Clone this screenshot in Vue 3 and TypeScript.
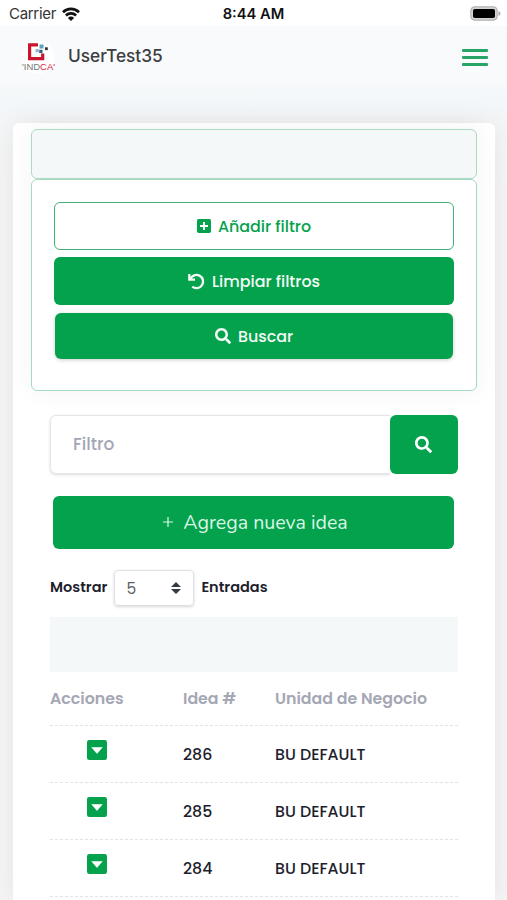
<script setup lang="ts">
interface Idea {
  id: number
  unit: string
}

const ideas: Idea[] = [
  { id: 286, unit: 'BU DEFAULT' },
  { id: 285, unit: 'BU DEFAULT' },
  { id: 284, unit: 'BU DEFAULT' },
]

const searchPath =
  'M505 442.7L405.3 343c-4.5-4.5-10.6-7-17-7H372c27.6-35.3 44-79.7 44-128C416 93.1 322.9 0 208 0S0 93.1 0 208s93.1 208 208 208c48.3 0 92.7-16.4 128-44v16.3c0 6.4 2.5 12.5 7 17l99.700 99.700c9.400 9.400 24.600 9.400 33.900 0l28.300-28.300c9.400-9.400 9.400-24.600.1-34zM208 336c-70.700 0-128-57.200-128-128 0-70.700 57.200-128 128-128 70.700 0 128 57.200 128 128 0 70.700-57.200 128-128 128z'
</script>

<template>
  <div class="screen">
    <div class="status">
      <div class="carrier">
        <span class="carrier-name">Carrier</span>
        <svg class="wifi" viewBox="0 0 18 14" fill="none" stroke="#111" stroke-width="2.700">
          <path d="M1 5.200a11.500 11.500 0 0 1 16 0M3.900 8.500a7.300 7.300 0 0 1 10.200 0" />
          <path d="M9 14 5.900 10.900a4.400 4.400 0 0 1 6.200 0z" fill="#111" stroke="none" />
        </svg>
      </div>
      <span class="clock">8:44 AM</span>
      <svg class="battery" viewBox="0 0 31 15">
        <rect x=".8" y=".8" width="26.400" height="13.400" rx="4" fill="#d4d4d4" stroke="#b4b4b4" stroke-width="1.200" />
        <rect x="3" y="3" width="22" height="9" rx="1.800" fill="#000" />
        <path d="M28.500 5v5q2-.8 2-2.500t-2-2.500" fill="#aaa" />
      </svg>
    </div>

    <header class="topbar">
      <svg class="logo" viewBox="0 0 34 34">
        <circle cx="17" cy="17" r="16.500" fill="#fff" />
        <path d="M17 4.800H8.600v13.900h13.100v-5.200" fill="none" stroke="#c8142f" stroke-width="3.200" />
        <path d="M18.500 4.500h4v4h-4z" fill="#5aa3ba" />
        <path d="M14.500 9h3.300v3.300h-3.300z" fill="#8fb8cc" />
        <path d="M18.200 9.800h3.300v3.300h-3.300z" fill="#33607f" />
        <path d="M24 7.300h2.800v2.800h-2.800z" fill="#333" />
        <text x="1" y="29.800" class="logo-text" textLength="33" lengthAdjust="spacingAndGlyphs"><tspan fill="#777">'IND</tspan><tspan fill="#d92547">CA'</tspan></text>
      </svg>
      <span class="username">UserTest35</span>
      <button class="menu" aria-label="Menu"><i /><i /><i /></button>
    </header>

    <main class="card">
      <section class="filters">
        <div class="filters-head" />
        <div class="filters-body">
          <button class="btn outline">
            <svg class="ico-plus" viewBox="0 0 14 14"><rect width="14" height="14" rx="1.700" fill="currentColor" /><path d="M7 3v8M3 7h8" stroke="#fff" stroke-width="2" /></svg>
            <span>Añadir filtro</span>
          </button>
          <button class="btn solid">
            <svg class="ico-undo" viewBox="0 0 17 17" fill="none" stroke="currentColor" stroke-width="2.300"><path d="M1.300 1v5.700H7M2.300 6.200A6.600 6.600 0 1 1 4.300 13.600" /></svg>
            <span>Limpiar filtros</span>
          </button>
          <button class="btn solid inset">
            <svg class="ico-search" viewBox="0 0 512 512"><path :d="searchPath" fill="currentColor" /></svg>
            <span>Buscar</span>
          </button>
        </div>
      </section>

      <div class="content">
        <div class="search">
          <div class="search-field"><span>Filtro</span></div>
          <button class="search-btn" aria-label="Buscar">
            <svg viewBox="0 0 512 512"><path :d="searchPath" fill="currentColor" /></svg>
          </button>
        </div>

        <button class="new-idea">
          <svg viewBox="0 0 10 10"><path d="M5 0v10M0 5h10" stroke="currentColor" stroke-width="1.200" /></svg>
          <span>Agrega nueva idea</span>
        </button>

        <div class="length">
          <span>Mostrar</span>
          <div class="select">
            <span>5</span>
            <svg viewBox="0 0 10 12"><path d="M5 0 10 5H0zM5 12 0 7h10z" fill="#343a40" /></svg>
          </div>
          <span>Entradas</span>
        </div>

        <div class="band" />

        <div class="row head">
          <span><b>Acciones</b></span>
          <span><b>Idea #</b></span>
          <span><b>Unidad de Negocio</b></span>
        </div>
        <div v-for="idea in ideas" :key="idea.id" class="row">
          <span class="action">
            <svg viewBox="0 0 20 20"><rect width="20" height="20" rx="2.200" fill="#04a24c" /><path d="M4.800 7.500h10.400L10 13.500z" fill="#fff" stroke="#fff" stroke-width=".6" stroke-linejoin="round" /></svg>
          </span>
          <span><b>{{ idea.id }}</b></span>
          <span><b>{{ idea.unit }}</b></span>
        </div>
      </div>
    </main>
  </div>
</template>

<style>
body {
  margin: 0;
  overflow: hidden;
}
</style>

<style scoped>
* {
  box-sizing: border-box;
}
.screen {
  height: 900px;
  overflow: hidden;
  background: linear-gradient(#f8fafb 80px, #f3f7f9 100px, #f5f6f7 130px, #f5f5f5 200px);
  font-family: Poppins, Inter, sans-serif;
  color: #1e1e2d;
}
svg {
  display: block;
  flex: none;
}
span,
b {
  white-space: nowrap;
}
button {
  font: inherit;
  border: 0;
  padding: 0;
  margin: 0;
}
.status {
  height: 26px;
  display: grid;
  grid-template-columns: 1fr auto 1fr;
  align-items: center;
  padding: 1px 7px 0 8px;
  background: #fff;
  font-family: Inter, sans-serif;
  font-size: 15px;
}
.carrier {
  display: flex;
  align-items: center;
  gap: 6px;
  padding-left: 1px;
  color: #333;
}
.carrier-name {
  letter-spacing: -0.3px;
}
.wifi {
  width: 18px;
  height: 14px;
}
.clock {
  margin-left: -1px;
  font-weight: 600;
  font-size: 14.7px;
  color: #111;
}
.battery {
  width: 31px;
  height: 15px;
  justify-self: end;
  margin-right: -1px;
}
.topbar {
  height: 62px;
  display: flex;
  align-items: center;
  padding: 0 19px 0 21px;
}
.logo {
  width: 34px;
  height: 34px;
}
.logo-text {
  font: 8.5px "Liberation Sans", sans-serif;
}
.username {
  margin: -3px 0 0 13px;
  font-family: Inter, sans-serif;
  font-size: 17.3px;
  font-weight: 500;
  color: #3c3e42;
}
.menu {
  margin-left: auto;
  width: 26px;
  display: flex;
  flex-direction: column;
  gap: 4px;
  background: none;
}
.menu i {
  height: 3px;
  border-radius: 1px;
  background: #27a567;
}
.card {
  margin: 35px 12px 0 13px;
  height: 777px;
  padding: 6px 18px 0;
  border-radius: 6px 6px 0 0;
  background: #fff;
  box-shadow: 0 0 26px rgba(60, 50, 60, 0.09);
}
.filters {
  border-radius: 6px;
  box-shadow: 0 0 26px rgba(60, 50, 60, 0.055);
}
.filters-head {
  height: 50px;
  border: 1.5px solid #add9c5;
  border-radius: 6px;
  background: #f4f8f9;
}
.filters-body {
  height: 212px;
  padding: 22px 22px;
  display: flex;
  flex-direction: column;
  gap: 7px;
  border: 1px solid #a4dabf;
  border-radius: 6px;
  background: #fff;
}
.btn {
  height: 48px;
  flex: none;
  display: flex;
  align-items: center;
  justify-content: center;
  border-radius: 6px;
  font-size: 15.9px;
  font-weight: 500;
}
.outline {
  border: 1.5px solid #42b077;
  background: #fff;
  color: #04a24c;
}
.solid {
  background: #04a24c;
  color: #f3fbf6;
}
.inset {
  height: 46px;
  margin: 1px 1px 0;
  box-shadow: 0 1px 4px rgba(0, 0, 0, 0.2);
}
.ico-plus {
  width: 14px;
  height: 14px;
  margin-right: 7px;
}
.ico-undo {
  width: 17px;
  height: 17px;
  margin-right: 7px;
}
.ico-search {
  width: 16px;
  height: 16px;
  margin-right: 7px;
}
.content {
  padding: 24px 19px 0 19px;
}
.search {
  height: 59px;
  display: flex;
}
.search-field {
  flex: 1;
  display: flex;
  align-items: center;
  padding: 0 0 1px 22px;
  border: 1.5px solid #e6e6ea;
  border-right: 0;
  border-radius: 6px 0 0 6px;
  box-shadow: 0 1px 3px rgba(0, 0, 0, 0.14);
  color: #a4a6b6;
  font-size: 17px;
  font-weight: 500;
}
.search-btn {
  width: 68px;
  padding: 0 1px 1px 0;
  display: grid;
  place-items: center;
  border-radius: 6px;
  background: #04a24c;
  color: #fff;
}
.search-btn svg {
  width: 17px;
  height: 17px;
}
.new-idea {
  width: 401px;
  height: 53px;
  margin: 22px 0 0 3px;
  padding: 0 0 1px 4px;
  display: flex;
  align-items: center;
  justify-content: center;
  gap: 10px;
  border-radius: 6px;
  background: #04a24c;
  color: #dcf6e6;
  font-family: Nunito, "Noto Sans", sans-serif;
  font-size: 19.6px;
}
.new-idea svg {
  width: 10px;
  height: 10px;
}
.length {
  margin-top: 21px;
  height: 36px;
  display: flex;
  align-items: center;
  font-size: 14.5px;
  font-weight: 600;
}
.length > span {
  margin-top: -2px;
}
.select {
  width: 80px;
  height: 36px;
  margin: 0 7px;
  padding: 0 12px 0 11px;
  display: flex;
  align-items: center;
  justify-content: space-between;
  border: 1.5px solid #dfe0e4;
  border-radius: 4px;
  box-shadow: 0 1px 3px rgba(0, 0, 0, 0.16);
  font-weight: 400;
  font-size: 15.5px;
  color: #5c5f66;
}
.select svg {
  width: 10px;
  height: 12px;
}
.band {
  height: 55px;
  margin-top: 11px;
  background: #f4f8f9;
}
.row {
  height: 57px;
  display: grid;
  grid-template-columns: 133px 92px 1fr;
  align-items: center;
  border-bottom: 1.5px dashed #e2e3e6;
}
.row b {
  font-weight: 500;
  font-size: 15.8px;
}
.row.head {
  height: 54px;
  color: #a5a7b5;
}
.row.head b {
  font-weight: 600;
  font-size: 15.8px;
}
.action svg {
  width: 20px;
  height: 20px;
  margin: -8px 0 0 37px;
}
</style>
